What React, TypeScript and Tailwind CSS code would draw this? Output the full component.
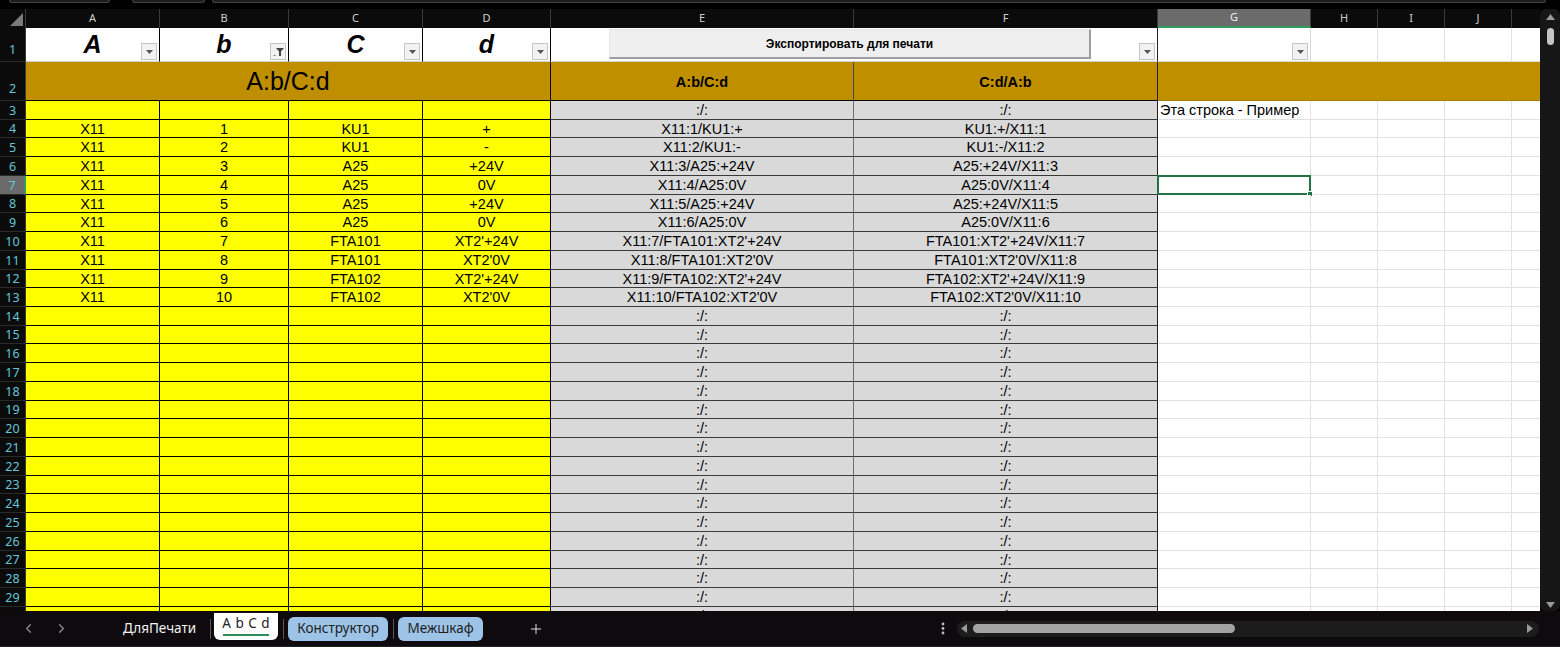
import { ChevronLeft, ChevronRight, Plus } from "lucide-react";

const data = [
    ["X11", "1", "KU1", "+"],
    ["X11", "2", "KU1", "-"],
    ["X11", "3", "A25", "+24V"],
    ["X11", "4", "A25", "0V"],
    ["X11", "5", "A25", "+24V"],
    ["X11", "6", "A25", "0V"],
    ["X11", "7", "FTA101", "XT2'+24V"],
    ["X11", "8", "FTA101", "XT2'0V"],
    ["X11", "9", "FTA102", "XT2'+24V"],
    ["X11", "10", "FTA102", "XT2'0V"],
];

// rows 3..30, heights alternate so the lines land like the 18.75px rows in Excel
const rowHeights = [19, 18, 19, 19, 19, 18, 19, 19, 19, 18, 19, 19, 18, 19, 19, 19, 18, 19, 19, 19, 18, 19, 19, 19, 18, 19, 19, 19];

const yellowW = ["w-[134px]", "w-[129px]", "w-[134px]", "w-[128px]"];

const Arrow = () => (
    <svg width="7" height="4" viewBox="0 0 7 4">
        <path d="M0 0h7L3.5 4z" fill="#555" />
    </svg>
);

const FilterBtn = ({ filtered = false }: { filtered?: boolean }) => (
    <span className="absolute right-[2px] bottom-[1px] w-[16px] h-[17px] bg-[#f2f2f2] border border-[#c6c6c6] flex items-center justify-center">
        {filtered ? (
            <svg width="11" height="8" viewBox="0 0 11 8">
                <path d="M0 7h3l-1.5 1z" fill="#555" />
                <path d="M3 0h8L8 3.5V8H6V3.5z" fill="#444" />
            </svg>
        ) : (
            <Arrow />
        )}
    </span>
);

const RowHead = ({ n, selected = false, bottom = false, h }: { n: number; selected?: boolean; bottom?: boolean; h: string }) => (
    <div
        className={`w-[26px] shrink-0 ${h} flex justify-center ${bottom ? "items-end pb-[1px]" : "items-center pt-[2px]"} border-b border-[#2a2a2a] text-[12.5px] text-[#63c7d7] font-['Noto_Sans',sans-serif] ${
            selected ? "bg-[#6b6b6b] border-r-2 border-r-[#2e9c5e]" : "bg-[#0b0b0b] border-r border-r-[#3a3a3a]"
        }`}
    >
        {n}
    </div>
);

const ColHead = ({ label, w, selected = false }: { label: string; w: string; selected?: boolean }) => (
    <div
        className={`${w} shrink-0 h-full flex items-center justify-center border-r border-[#3a3a3a] text-[11px] font-['Noto_Sans',sans-serif] ${
            selected ? "bg-[#6b6b6b] text-[#f0f0f0] border-b-2 border-b-[#2e9c5e]" : "text-[#cfcfcf]"
        }`}
    >
        {label}
    </div>
);

const DataRow = ({ n, h }: { n: number; h: string }) => {
    const r = n >= 4 && n <= 13 ? data[n - 4] : null;
    const e = r ? `${r[0]}:${r[1]}/${r[2]}:${r[3]}` : ":/:";
    const f = r ? `${r[2]}:${r[3]}/${r[0]}:${r[1]}` : ":/:";
    return (
        <div className={`flex ${h}`}>
            <RowHead n={n} h={h} selected={n === 7} />
            {yellowW.map((w, i) => (
                <div key={i} className={`${w} shrink-0 bg-[#ffff00] border-r border-b border-black flex items-center justify-center pt-[2px]`}>
                    {r ? r[i] : ""}
                </div>
            ))}
            <div className="w-[303px] shrink-0 bg-[#d9d9d9] border-r border-r-[#6e6e6e] border-b border-b-[#3a3a3a] flex items-center justify-center pt-[2px]">
                {e}
            </div>
            <div className="w-[304px] shrink-0 bg-[#d9d9d9] border-r border-r-[#222] border-b border-b-[#3a3a3a] flex items-center justify-center pt-[2px]">
                {f}
            </div>
            <div className="relative w-[153px] shrink-0 bg-white border-r border-b border-[#e1e1e1] flex items-center pl-[2px] pt-[2px] whitespace-nowrap">
                {n === 3 ? "Эта строка - Пример" : ""}
                {n === 7 && (
                    <span className="absolute -left-[1px] -top-[1px] -right-[1px] -bottom-[1px] border-2 border-[#217346]">
                        <span className="absolute -right-[4px] -bottom-[4px] w-[6px] h-[6px] bg-[#217346] border border-white" />
                    </span>
                )}
            </div>
            <div className="w-[67px] shrink-0 bg-white border-r border-b border-[#e1e1e1]" />
            <div className="w-[67px] shrink-0 bg-white border-r border-b border-[#e1e1e1]" />
            <div className="w-[67px] shrink-0 bg-white border-r border-b border-[#e1e1e1]" />
            <div className="flex-1 bg-white border-b border-[#e1e1e1]" />
        </div>
    );
};

const App = () => {
    return (
        <div className="w-[1560px] h-[647px] bg-black overflow-hidden flex flex-col font-['Liberation_Sans',Arial,sans-serif] text-[14.5px] text-black">
            {/* bits of the formula bar above */}
            <div className="h-[9px] flex items-start shrink-0">
                <div className="ml-[9px] w-[101px] h-[3px] rounded-b-md border border-t-0 border-[#444] bg-[#1d1d1d]" />
                <div className="ml-[22px] w-[73px] h-[3px] rounded-b-md border border-t-0 border-[#444] bg-[#1d1d1d]" />
                <div className="ml-[7px] flex-1 mr-[14px] h-[3px] rounded-b-md border border-t-0 border-[#444] bg-[#1d1d1d]" />
            </div>

            <div className="h-[602px] flex shrink-0">
                <div className="w-[1540px] overflow-hidden flex flex-col">
                    {/* column letters */}
                    <div className="h-[19px] flex shrink-0 bg-[#0b0b0b]">
                        <div className="w-[26px] shrink-0 border-r border-[#3a3a3a] flex items-end justify-end pr-[2px] pb-[2px]">
                            <svg width="13" height="13" viewBox="0 0 13 13">
                                <path d="M13 0v13H0z" fill="#7a7a7a" />
                            </svg>
                        </div>
                        <ColHead label="A" w="w-[134px]" />
                        <ColHead label="B" w="w-[129px]" />
                        <ColHead label="C" w="w-[134px]" />
                        <ColHead label="D" w="w-[128px]" />
                        <ColHead label="E" w="w-[303px]" />
                        <ColHead label="F" w="w-[304px]" />
                        <ColHead label="G" w="w-[153px]" selected />
                        <ColHead label="H" w="w-[67px]" />
                        <ColHead label="I" w="w-[67px]" />
                        <ColHead label="J" w="w-[67px]" />
                        <div className="flex-1" />
                    </div>

                    {/* row 1 */}
                    <div className="h-[34px] flex shrink-0">
                        <RowHead n={1} h="h-[34px]" bottom />
                        {["A", "b", "C", "d"].map((t, i) => (
                            <div key={t} className={`relative ${yellowW[i]} shrink-0 bg-white border-r border-r-black border-b border-b-[#d0d0d0] flex items-center justify-center text-[25px] font-bold italic`}>
                                {t}
                                <FilterBtn filtered={i === 1} />
                            </div>
                        ))}
                        <div className="relative w-[607px] shrink-0 bg-white border-r border-r-[#222] border-b border-b-[#d0d0d0] pl-[58px] pt-[1px]">
                            <button className="w-[482px] h-[30px] bg-[#efefef] border-t border-l border-t-[#e4e4e4] border-l-[#e4e4e4] border-r-2 border-b-2 border-r-[#9d9d9d] border-b-[#9d9d9d] text-[12px] font-bold">
                                Экспортировать для печати
                            </button>
                            <FilterBtn />
                        </div>
                        <div className="relative w-[153px] shrink-0 bg-white border-r border-b border-[#d9d9d9]">
                            <FilterBtn />
                        </div>
                        <div className="w-[67px] shrink-0 bg-white border-r border-b border-[#e1e1e1]" />
                        <div className="w-[67px] shrink-0 bg-white border-r border-b border-[#e1e1e1]" />
                        <div className="w-[67px] shrink-0 bg-white border-r border-b border-[#e1e1e1]" />
                        <div className="flex-1 bg-white border-b border-[#e1e1e1]" />
                    </div>

                    {/* row 2 */}
                    <div className="h-[39px] flex shrink-0">
                        <RowHead n={2} h="h-[39px]" bottom />
                        <div className="w-[525px] shrink-0 bg-[#bf8f00] border-r border-b border-black flex items-center justify-center pt-[2px] text-[25px]">
                            A:b/C:d
                        </div>
                        <div className="w-[303px] shrink-0 bg-[#bf8f00] border-r border-r-[#4a4a4a] border-b border-b-black flex items-center justify-center pt-[3px] font-bold">
                            A:b/C:d
                        </div>
                        <div className="w-[304px] shrink-0 bg-[#bf8f00] border-r border-r-[#222] border-b border-b-black flex items-center justify-center pt-[3px] font-bold">
                            C:d/A:b
                        </div>
                        <div className="flex-1 bg-[#bf8f00] border-b border-[#a87e00]" />
                    </div>

                    {rowHeights.map((h, i) => (
                        <DataRow key={i} n={i + 3} h={h === 19 ? "h-[19px] shrink-0" : "h-[18px] shrink-0"} />
                    ))}
                </div>

                {/* vertical scrollbar */}
                <div className="w-[20px] shrink-0 bg-[#161616] rounded-md flex flex-col items-center pt-[5px] pb-[3px]">
                    <svg width="9" height="6" viewBox="0 0 9 6">
                        <path d="M4.5 0L9 6H0z" fill="#9a9a9a" />
                    </svg>
                    <div className="mt-[8px] w-[7px] h-[17px] rounded-full bg-[#c4c4c4]" />
                    <div className="flex-1" />
                    <svg width="9" height="6" viewBox="0 0 9 6">
                        <path d="M0 0h9L4.5 6z" fill="#9a9a9a" />
                    </svg>
                </div>
            </div>

            {/* sheet tabs */}
            <div className="flex-1 flex items-center bg-[#0e0a0e] border-b border-[#222] font-['Noto_Sans',sans-serif] text-[13.5px]">
                <ChevronLeft size={15} strokeWidth={2} className="ml-[21px] text-[#8d8d8d]" />
                <ChevronRight size={15} strokeWidth={2} className="ml-[18px] text-[#8d8d8d]" />
                <span className="ml-[54px] text-[#f2f2f2]">ДляПечати</span>
                <span className="ml-[14px] w-px h-[20px] bg-[#555]" />
                <div className="ml-[3px] w-[64px] h-[27px] self-start mt-[2px] bg-white rounded-b-md flex flex-col items-center justify-center">
                    <span className="tracking-[0.5px] text-[#222] leading-none">A b C d</span>
                    <span className="mt-[3px] w-[46px] h-[2px] bg-[#2e8b57]" />
                </div>
                <span className="ml-[5px] w-px h-[20px] bg-[#555]" />
                <div className="ml-[4px] w-[100px] h-[24px] bg-[#9dc3e6] rounded-md flex items-center justify-center text-[#1e1e1e]">
                    Конструктор
                </div>
                <span className="ml-[5px] w-px h-[20px] bg-[#555]" />
                <div className="ml-[4px] w-[85px] h-[24px] bg-[#9dc3e6] rounded-md flex items-center justify-center text-[#1e1e1e]">
                    Межшкаф
                </div>
                <Plus size={16} strokeWidth={1.5} className="ml-[45px] text-[#e0e0e0]" />
                <div className="flex-1" />
                <svg width="4" height="13" viewBox="0 0 4 13" className="mr-[12px]">
                    <circle cx="2" cy="2" r="1.4" fill="#bbb" />
                    <circle cx="2" cy="6.5" r="1.4" fill="#bbb" />
                    <circle cx="2" cy="11" r="1.4" fill="#bbb" />
                </svg>
                <div className="w-[582px] h-[16px] mr-[21px] rounded-full bg-[#1c1c1c] flex items-center pl-[4px] pr-[6px]">
                    <svg width="6" height="9" viewBox="0 0 6 9">
                        <path d="M6 0v9L0 4.5z" fill="#9a9a9a" />
                    </svg>
                    <div className="ml-[6px] w-[262px] h-[9px] rounded-full bg-[#a3a3a3]" />
                    <div className="flex-1" />
                    <svg width="6" height="9" viewBox="0 0 6 9">
                        <path d="M0 0v9l6-4.5z" fill="#9a9a9a" />
                    </svg>
                </div>
            </div>
        </div>
    );
};

export default App;
